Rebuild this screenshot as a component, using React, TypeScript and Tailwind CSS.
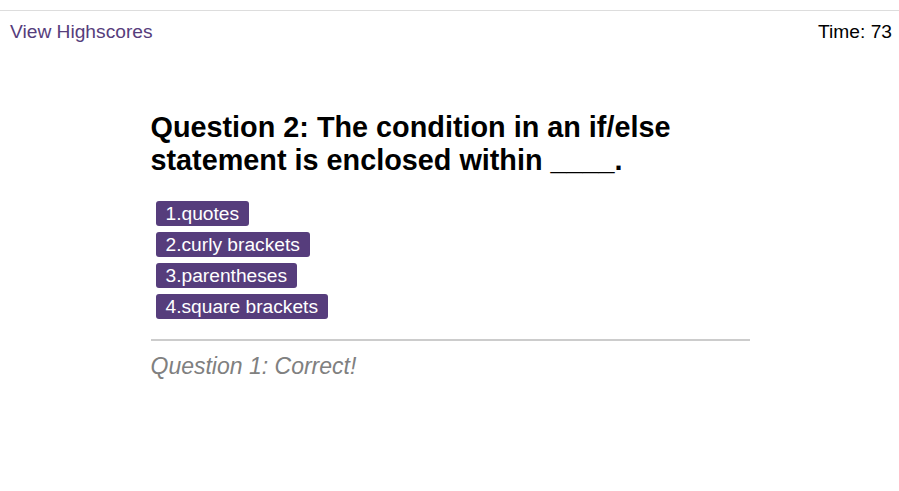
const CHOICES = ['1.quotes', '2.curly brackets', '3.parentheses', '4.square brackets'];

export default function App() {
  return (
    <div className="min-h-screen bg-white pt-[10px] font-['Liberation_Sans',Arial,sans-serif]">
      <header className="flex justify-between border-t border-[#dddddd] pl-[10px] pr-[7px] pt-[10px] text-[19.2px] leading-[21px]">
        <a className="text-[#563d7c]">View Highscores</a>
        <span className="text-black">Time: 73</span>
      </header>

      <main className="mx-auto mt-[69px] w-[600px] pl-[1px]">
        <h1 className="text-[28.8px] font-bold leading-[33px] text-black">
          Question 2: The condition in an if/else statement is enclosed within ____.
        </h1>

        <div className="mt-[24px] flex flex-col items-start gap-[6px] pl-[5px]">
          {CHOICES.map((c) => (
            <button
              key={c}
              className="rounded-[3px] bg-[#563d7c] px-[10px] text-[19.2px] leading-[25px] text-white"
            >
              {c}
            </button>
          ))}
        </div>

        <hr className="mt-[20px] border-t-2 border-[#cccccc]" />
        <p className="mt-[12px] text-[23px] italic leading-[26px] text-[#808080]">
          Question 1: Correct!
        </p>
      </main>
    </div>
  );
}
